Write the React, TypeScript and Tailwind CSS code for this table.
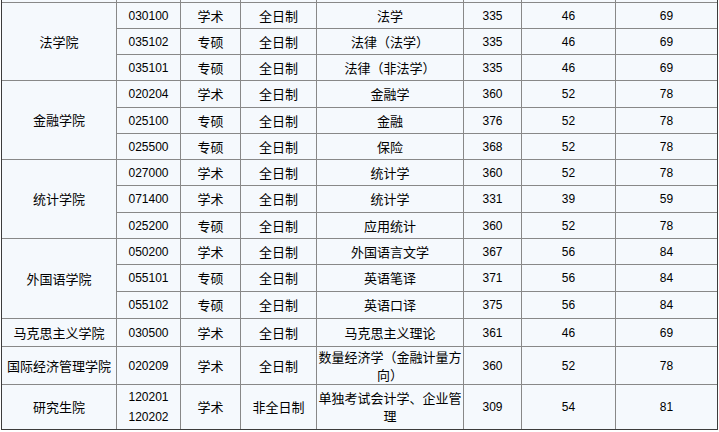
import React from "react";

type Row = {
  code: React.ReactNode;
  kind: string;
  mode: string;
  major: React.ReactNode;
  total: string;
  a: string;
  b: string;
  codeMulti?: boolean;
  majorMulti?: boolean;
};

const groups: { name: string; rows: Row[] }[] = [
  {
    name: "法学院",
    rows: [
      { code: "030100", kind: "学术", mode: "全日制", major: "法学", total: "335", a: "46", b: "69" },
      { code: "035102", kind: "专硕", mode: "全日制", major: "法律（法学）", total: "335", a: "46", b: "69" },
      { code: "035101", kind: "专硕", mode: "全日制", major: "法律（非法学）", total: "335", a: "46", b: "69" },
    ],
  },
  {
    name: "金融学院",
    rows: [
      { code: "020204", kind: "学术", mode: "全日制", major: "金融学", total: "360", a: "52", b: "78" },
      { code: "025100", kind: "专硕", mode: "全日制", major: "金融", total: "376", a: "52", b: "78" },
      { code: "025500", kind: "专硕", mode: "全日制", major: "保险", total: "368", a: "52", b: "78" },
    ],
  },
  {
    name: "统计学院",
    rows: [
      { code: "027000", kind: "学术", mode: "全日制", major: "统计学", total: "360", a: "52", b: "78" },
      { code: "071400", kind: "学术", mode: "全日制", major: "统计学", total: "331", a: "39", b: "59" },
      { code: "025200", kind: "专硕", mode: "全日制", major: "应用统计", total: "360", a: "52", b: "78" },
    ],
  },
  {
    name: "外国语学院",
    rows: [
      { code: "050200", kind: "学术", mode: "全日制", major: "外国语言文学", total: "367", a: "56", b: "84" },
      { code: "055101", kind: "专硕", mode: "全日制", major: "英语笔译", total: "371", a: "56", b: "84" },
      { code: "055102", kind: "专硕", mode: "全日制", major: "英语口译", total: "375", a: "56", b: "84" },
    ],
  },
  {
    name: "马克思主义学院",
    rows: [
      { code: "030500", kind: "学术", mode: "全日制", major: "马克思主义理论", total: "361", a: "46", b: "69" },
    ],
  },
  {
    name: "国际经济管理学院",
    rows: [
      {
        code: "020209",
        kind: "学术",
        mode: "全日制",
        major: (
          <>
            数量经济学（金融计量方
            <br />
            向）
          </>
        ),
        majorMulti: true,
        total: "360",
        a: "52",
        b: "78",
      },
    ],
  },
  {
    name: "研究生院",
    rows: [
      {
        code: (
          <>
            120201
            <br />
            120202
          </>
        ),
        codeMulti: true,
        kind: "学术",
        mode: "非全日制",
        major: (
          <>
            单独考试会计学、企业管
            <br />
            理
          </>
        ),
        majorMulti: true,
        total: "309",
        a: "54",
        b: "81",
      },
    ],
  },
];

const cn = "[font-family:'Noto_Sans_CJK_SC','Liberation_Sans',sans-serif] text-[13px]";
const num = "[font-family:'Liberation_Sans','Noto_Sans_CJK_SC',sans-serif] text-[12px]";
const cell = "bg-[#f5f9fd] flex items-center justify-center text-center text-black";

export default function App() {
  const cells: React.ReactNode[] = [];
  for (let i = 0; i < 8; i++) cells.push(<div key={"top" + i} className="bg-[#f5f9fd]" />);
  let rowIdx = 2;
  groups.forEach((g, gi) => {
    const span = g.rows.length;
    const spanCls = span === 3 ? "row-span-3" : "row-span-1";
    cells.push(
      <div key={"g" + gi} className={`${cell} ${cn} ${spanCls} col-start-1`} style={{ gridRowStart: rowIdx }}>
        {g.name}
      </div>
    );
    g.rows.forEach((r, ri) => {
      const k = `${gi}-${ri}`;
      cells.push(
        <div key={k + "c"} className={`${cell} ${num} ${r.codeMulti ? "leading-[20px]" : ""}`}>
          <span>{r.code}</span>
        </div>,
        <div key={k + "k"} className={`${cell} ${cn}`}>{r.kind}</div>,
        <div key={k + "m"} className={`${cell} ${cn}`}>{r.mode}</div>,
        <div key={k + "j"} className={`${cell} ${cn} ${r.majorMulti ? "leading-[18px]" : ""}`}>
          <span>{r.major}</span>
        </div>,
        <div key={k + "t"} className={`${cell} ${num}`}>{r.total}</div>,
        <div key={k + "a"} className={`${cell} ${num}`}>{r.a}</div>,
        <div key={k + "b"} className={`${cell} ${num}`}>{r.b}</div>
      );
    });
    rowIdx += span;
  });

  return (
    <div className="h-[432px] w-[719px] bg-white overflow-hidden">
      <div className="ml-px w-[717px] border-x border-b border-[#3c3c3c] bg-[#888888]">
        <div className="grid gap-px grid-cols-[114px_63px_59px_75px_146px_57px_93px_101px] grid-rows-[2px_25px_25px_25px_26px_25px_25px_25px_26px_25px_25px_26px_26px_27px_37px_44px] grid-flow-dense">
          {cells}
        </div>
      </div>
    </div>
  );
}
